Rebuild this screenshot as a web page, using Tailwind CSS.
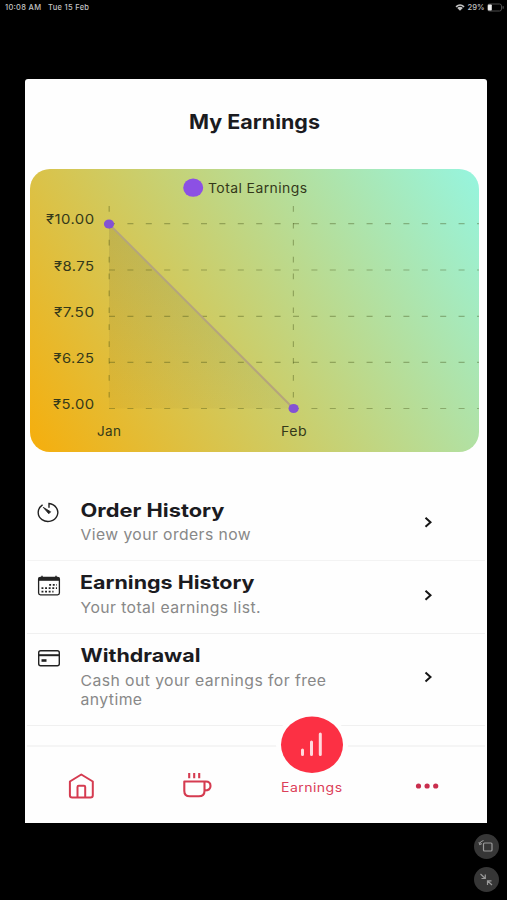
<!DOCTYPE html>
<html lang="en">
<head>
<meta charset="utf-8">
<title>My Earnings</title>
<script src="https://cdn.jsdelivr.net/npm/@tailwindcss/browser@4"></script>
</head>
<body class="relative flex h-[900px] w-[507px] flex-col overflow-hidden bg-black font-['Inter','Noto_Sans',sans-serif]">
  <header class="flex h-[79px] shrink-0 items-start justify-between pt-[2px] pl-[5px] pr-[3px] text-[#c4c4c4]">
    <div class="flex h-[11px] items-center text-[7.5px] font-medium leading-[11px] whitespace-nowrap">
      <svg class="block h-[11px] w-[100px]" viewBox="0 0 100 11" fill="currentColor"><text x="0" y="8.2" textLength="36">10:08 AM</text><text x="43" y="8.2" textLength="41">Tue 15 Feb</text></svg>
    </div>
    <svg class="block h-[11px] w-[50px]" viewBox="454 2 50 11" fill="currentColor">
      <path d="M455.5 6.3Q460 2.3 464.600 6.3L463.600 7.400Q460 4.300 456.600 7.400ZM457.200 8Q460 5.600 462.900 8L460 10.800Z"/>
      <text x="467.500" y="10.300" font-size="7.800" font-weight="500" textLength="17" lengthAdjust="spacingAndGlyphs">29%</text>
      <rect x="487.500" y="4" width="14" height="7" rx="2" fill="none" stroke="#555" stroke-width="0.9"/>
      <rect x="488" y="4.500" width="3.800" height="6" rx="0.800" fill="#eee"/>
      <rect x="502.600" y="6.200" width="1" height="2.500" fill="#666"/>
    </svg>
  </header>

  <main class="ml-[25px] flex h-[744px] w-[461.500px] shrink-0 flex-col rounded-t-[3px] bg-[#fefefe]">
    <h1 class="flex h-[90px] shrink-0 items-center justify-center">
      <svg class="block h-[30px] w-[134px]" viewBox="188.500 109 134 30" font-size="20" font-weight="700" fill="#1b1b1f"><text x="188.500" y="128.700" textLength="131" lengthAdjust="spacingAndGlyphs">My Earnings</text></svg>
    </h1>

    <section class="ml-[5px] h-[283px] w-[449px] shrink-0 overflow-hidden rounded-[20px] bg-[linear-gradient(57.800deg,#f6ae0c,#96f5df)]">
      <svg class="block h-full w-full" viewBox="30 169 449 283">
        <defs>
          <linearGradient id="area" x1="0" y1="0" x2="0" y2="1"><stop offset="0" stop-color="#4a3c20" stop-opacity=".14"/><stop offset="1" stop-color="#4a3c20" stop-opacity=".04"/></linearGradient>
        </defs>
        <path d="M109 224V408.500H293.500Z" fill="url(#area)"/>
        <g stroke="#3d4a10" stroke-opacity=".36" stroke-width="1.200" fill="none">
          <g stroke-dasharray="6 12.400">
            <path d="M109 223.700H479"/><path d="M109 270H479"/><path d="M109 316.300H479"/><path d="M109 362.400H479"/><path d="M109 408.500H479"/>
          </g>
          <g stroke-dasharray="5.700 11.200">
            <path d="M109.200 206V408"/><path d="M293.400 206V408"/>
          </g>
        </g>
        <path d="M109 224L293.500 408.500" stroke="#b5a57c" stroke-width="2"/>
        <g fill="#8452d4">
          <ellipse cx="109" cy="224" rx="5.100" ry="4.600"/><ellipse cx="293.600" cy="408.500" rx="5.100" ry="4.600"/>
        </g>
        <ellipse cx="193.200" cy="187.700" rx="10" ry="9.100" fill="#8c50e4"/>
        <g class="tracking-[0.4px]" font-size="13.200" fill="#34391a" font-weight="400">
          <text x="208" y="193" textLength="99.500" lengthAdjust="spacingAndGlyphs">Total Earnings</text>
          <text x="46" y="224.300" textLength="48.500" lengthAdjust="spacingAndGlyphs">₹10.00</text>
          <text x="54" y="270.500" textLength="40.500" lengthAdjust="spacingAndGlyphs">₹8.75</text>
          <text x="54" y="316.500" textLength="40.500" lengthAdjust="spacingAndGlyphs">₹7.50</text>
          <text x="53.500" y="362.700" textLength="41" lengthAdjust="spacingAndGlyphs">₹6.25</text>
          <text x="53" y="408.800" textLength="41.500" lengthAdjust="spacingAndGlyphs">₹5.00</text>
          <text x="97" y="435.500" textLength="24.500" lengthAdjust="spacingAndGlyphs">Jan</text>
          <text x="281" y="435.500" textLength="26" lengthAdjust="spacingAndGlyphs">Feb</text>
        </g>
      </svg>
    </section>

    <ul class="mt-[36px] flex w-full shrink-0 flex-col px-[2px]">
      <li class="flex h-[73px] border-b border-[#f3f3f3]">
        <svg class="ml-[9px] mt-[12px] h-[26px] w-[26px] shrink-0" viewBox="36 500 26 26" fill="none" stroke="#222">
          <path d="M42.200 505.200A9.800 9 0 1 0 49 503.500V507.200" stroke-width="1.400" stroke-linecap="round"/><path d="M43.300 507.400L50.600 511.800L48.800 513.700Z" fill="#222" stroke-width=".9" stroke-linejoin="round"/>
        </svg>
        <svg class="ml-[17px] h-[72px] w-[260px] shrink-0" viewBox="79 488 260 72"><text x="80.500" y="516.600" font-size="18.500" font-weight="700" fill="#1b1b1f" textLength="144" lengthAdjust="spacingAndGlyphs">Order History</text><text class="tracking-[0.4px]" x="80.500" y="540" font-size="15" fill="#888" textLength="170.500" lengthAdjust="spacingAndGlyphs">View your orders now</text></svg>
        <svg class="ml-[83px] mt-[26px] h-[16px] w-[14px] shrink-0" viewBox="0 0 14 16" fill="none" stroke="#161616" stroke-width="2"><path d="M3.500 3.800L8.500 8.300L3.500 12.800"/></svg>
      </li>
      <li class="flex h-[72.500px] border-b border-[#f0f0f0]">
        <svg class="ml-[9px] mt-[12px] h-[26px] w-[26px] shrink-0" viewBox="36 573 26 26" fill="none" stroke="#222">
          <rect x="38.600" y="577.300" width="20.800" height="17.600" rx="1.800" stroke-width="1.300"/><path d="M38.600 579.300H59.400" stroke-width="3"/><path d="M42 575.800V578M56 575.800V578" stroke-width="1.400"/>
          <path d="M49.200 584.800H57M41.500 588.200H57M41.500 591.600H53.500" stroke-width="1.700" stroke-dasharray="1.900 1.700"/>
        </svg>
        <svg class="ml-[17px] h-[72px] w-[260px] shrink-0" viewBox="79 561 260 72"><text x="80" y="589.300" font-size="18.500" font-weight="700" fill="#1b1b1f" textLength="174.500" lengthAdjust="spacingAndGlyphs">Earnings History</text><text class="tracking-[0.4px]" x="80.500" y="612.700" font-size="15" fill="#888" textLength="180.500" lengthAdjust="spacingAndGlyphs">Your total earnings list.</text></svg>
        <svg class="ml-[83px] mt-[26px] h-[16px] w-[14px] shrink-0" viewBox="0 0 14 16" fill="none" stroke="#161616" stroke-width="2"><path d="M3.500 3.700L8.500 8.200L3.500 12.700"/></svg>
      </li>
      <li class="flex h-[92px] border-b border-[#f0f0f0]">
        <svg class="ml-[9px] mt-[12px] h-[26px] w-[26px] shrink-0" viewBox="36 645.500 26 26" fill="none" stroke="#222">
          <rect x="38.700" y="650.300" width="20.600" height="14.900" rx="2" stroke-width="1.400"/><path d="M38.500 654.700H59.500" stroke-width="2"/><path d="M41.500 660H46.500" stroke-width="2.600"/>
        </svg>
        <svg class="ml-[17px] h-[90px] w-[260px] shrink-0" viewBox="79 633.500 260 90"><text x="80.500" y="661.300" font-size="18.500" font-weight="700" fill="#1b1b1f" textLength="120" lengthAdjust="spacingAndGlyphs">Withdrawal</text><g class="tracking-[0.4px]" font-size="15" fill="#888"><text x="80.500" y="685.200" textLength="246" lengthAdjust="spacingAndGlyphs">Cash out your earnings for free</text><text x="80.500" y="704.300" textLength="62" lengthAdjust="spacingAndGlyphs">anytime</text></g></svg>
        <svg class="ml-[83px] mt-[35px] h-[16px] w-[14px] shrink-0" viewBox="0 0 14 16" fill="none" stroke="#161616" stroke-width="2"><path d="M3.500 3.500L8.500 8L3.500 12.500"/></svg>
      </li>
    </ul>

    <nav class="relative mx-[2px] mt-[19.500px] grid h-[78px] shrink-0 grid-cols-4 border-t-2 border-[#f5f5f5] pt-[24px]">
      <a class="flex justify-center"><svg class="h-[30px] w-[32px]" viewBox="68 771 32 30" fill="none" stroke="#d53b50" stroke-width="2" stroke-linejoin="round"><path d="M69.900 781.500L81.300 774.500L92.800 781.500V795.300Q92.800 797.600 90.500 797.600H72.200Q69.900 797.600 69.900 795.300Z"/><path d="M77.500 797.600V787Q77.500 785.800 78.700 785.800H84Q85.200 785.800 85.200 787V797.600"/></svg></a>
      <a class="flex justify-center"><svg class="h-[30px] w-[32px]" viewBox="183.200 771 32 30" fill="none" stroke="#d53b50" stroke-width="2.100"><path d="M184.500 781.500H204.700V791Q204.700 796.300 199 796.300H190Q184.500 796.300 184.500 791ZM204.700 781.500H206Q210.700 781.500 210.700 786Q210.700 790.500 204.700 790.500" stroke-linejoin="round"/><path d="M189.400 773V778.200M194.400 773V778.200M199.400 773V778.200"/></svg></a>
      <a class="flex justify-center"><svg class="mt-[8px] h-[18px] w-[64px]" viewBox="281 779 64 18"><text class="tracking-[0.4px]" x="281" y="791.700" font-size="12.700" font-weight="400" fill="#dc3f5a" textLength="61.500" lengthAdjust="spacingAndGlyphs">Earnings</text></svg></a>
      <a class="flex justify-center"><svg class="h-[30px] w-[32px]" viewBox="411 771 32 30" fill="#c92e4d"><circle cx="418.500" cy="786" r="2.600"/><circle cx="427.100" cy="786" r="2.600"/><circle cx="435.700" cy="786" r="2.600"/></svg></a>
      <svg class="absolute left-[249px] top-[-35px] h-[66px] w-[72px]" viewBox="276 712 72 66"><ellipse cx="312" cy="744.700" rx="36" ry="33" fill="#fefefe"/><ellipse cx="312" cy="744.700" rx="31" ry="28.200" fill="#fc3044"/><g stroke="#ffd9dd" stroke-width="3" stroke-linecap="round"><path d="M302.500 750V754.500M311.500 742V754.500M320.300 734V754.500"/></g></svg>
    </nav>
  </main>

  <div class="absolute right-[8px] top-[834px] flex flex-col gap-[7.500px] text-[#9a9a9a]">
    <div class="flex size-[25px] items-center justify-center rounded-full bg-[#363636]"><svg class="size-[25px]" viewBox="0 0 25 25" fill="none" stroke="currentColor" stroke-width="1.200"><rect x="9.500" y="9" width="8.500" height="8" rx="1"/><path d="M5.500 10.500Q6 7 9.500 6.500M5 8L5.600 10.700L8 9.600" stroke-width="1"/></svg></div>
    <div class="flex size-[25px] items-center justify-center rounded-full bg-[#363636]"><svg class="size-[25px]" viewBox="0 0 25 25" fill="none" stroke="currentColor" stroke-width="1.200"><path d="M6.500 7L11 11.200M7.500 11.500H11.300V7.500M18 18L13.700 14M13.500 18V13.800H17.500"/></svg></div>
  </div>
</body>
</html>
